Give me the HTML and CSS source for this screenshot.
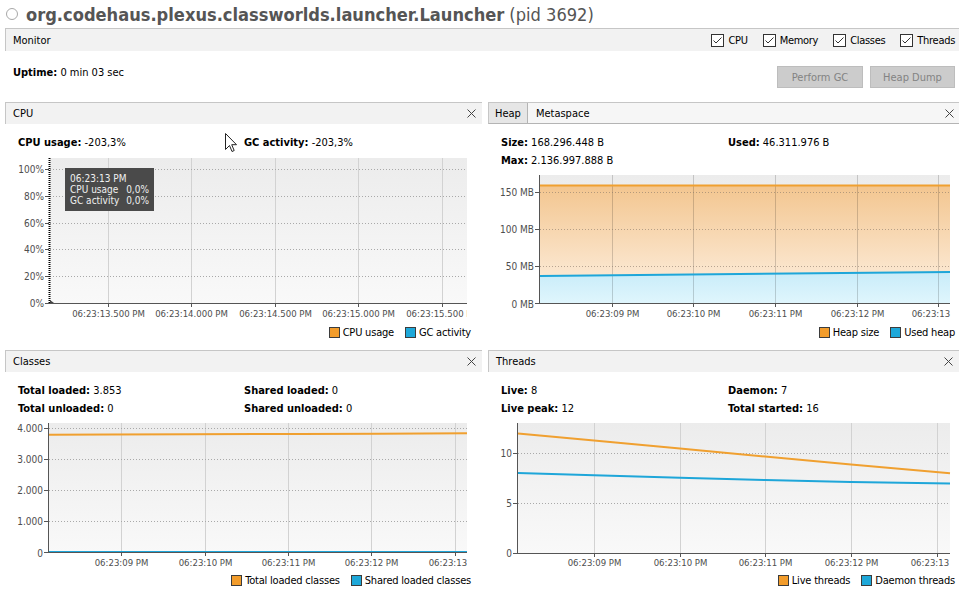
FILE: index.html
```html
<!DOCTYPE html>
<html>
<head>
<meta charset="utf-8">
<link rel="stylesheet" href="styles.css">
</head>
<body>
<div class="app">
  <header class="title">
    <span class="dot"></span>
    <b class="app-name">org.codehaus.plexus.classworlds.launcher.Launcher</b>
    <span class="pid">(pid 3692)</span>
  </header>

  <section class="monitor">
    <div class="monitor-bar">
      <span>Monitor</span>
      <div class="checks">
        <label class="check"><svg class="box" width="13" height="13" viewBox="0 0 13 13"><rect x="0.5" y="0.5" width="12" height="12" fill="#fff" stroke="#333"/><polyline points="2.5,6.5 5,9 10.5,3.5" fill="none" stroke="#333" stroke-width="1"/></svg>CPU</label>
        <label class="check"><svg class="box" width="13" height="13" viewBox="0 0 13 13"><rect x="0.5" y="0.5" width="12" height="12" fill="#fff" stroke="#333"/><polyline points="2.5,6.5 5,9 10.5,3.5" fill="none" stroke="#333" stroke-width="1"/></svg>Memory</label>
        <label class="check"><svg class="box" width="13" height="13" viewBox="0 0 13 13"><rect x="0.5" y="0.5" width="12" height="12" fill="#fff" stroke="#333"/><polyline points="2.5,6.5 5,9 10.5,3.5" fill="none" stroke="#333" stroke-width="1"/></svg>Classes</label>
        <label class="check"><svg class="box" width="13" height="13" viewBox="0 0 13 13"><rect x="0.5" y="0.5" width="12" height="12" fill="#fff" stroke="#333"/><polyline points="2.5,6.5 5,9 10.5,3.5" fill="none" stroke="#333" stroke-width="1"/></svg>Threads</label>
      </div>
    </div>
    <div class="monitor-body">
      <div class="uptime"><b>Uptime:</b> 0 min 03 sec</div>
      <div class="buttons">
        <div class="btn">Perform GC</div>
        <div class="btn btn2">Heap Dump</div>
      </div>
    </div>
  </section>

  <div class="grid">
    <!-- CPU -->
    <section class="panel">
      <div class="phead">
        <span>CPU</span>
        <svg class="close" width="9" height="9" viewBox="0 0 9 9"><path d="M0.5,0.5 L8.5,8.5 M8.5,0.5 L0.5,8.5" stroke="#444" stroke-width="1"/></svg>
      </div>
      <div class="stats one">
        <div><b>CPU usage:</b> -203,3%</div>
        <div class="gc"><b>GC activity:</b> -203,3%
          <svg class="cursor" width="13" height="20" viewBox="0 0 13 20"><path d="M0.5,0.5 V16.5 L4.5,12.5 L7,18.5 L9.2,17.5 L6.7,11.7 H11.5 Z" fill="#fff" stroke="#222" stroke-linejoin="miter"/></svg>
        </div>
      </div>
      <svg class="chart" width="477" height="170" viewBox="5 152 477 170">
        <defs>
          <linearGradient id="bgA" x1="0" y1="0" x2="0" y2="1"><stop offset="0" stop-color="#ececec"/><stop offset="1" stop-color="#f9f9f9"/></linearGradient>
          <clipPath id="clA"><rect x="5" y="152" width="462" height="170"/></clipPath>
        </defs>
        <rect x="50" y="158" width="417" height="146" fill="url(#bgA)"/>
        <g stroke="#d2d2d2" stroke-width="1">
          <line x1="108.5" y1="158" x2="108.5" y2="304"/>
          <line x1="191.5" y1="158" x2="191.5" y2="304"/>
          <line x1="275.5" y1="158" x2="275.5" y2="304"/>
          <line x1="358.5" y1="158" x2="358.5" y2="304"/>
          <line x1="442.5" y1="158" x2="442.5" y2="304"/>
        </g>
        <g stroke="#a9a9a9" stroke-dasharray="1,2">
          <line x1="50" y1="169.5" x2="467" y2="169.5"/>
          <line x1="50" y1="196.5" x2="467" y2="196.5"/>
          <line x1="50" y1="223.5" x2="467" y2="223.5"/>
          <line x1="50" y1="249.5" x2="467" y2="249.5"/>
          <line x1="50" y1="276.5" x2="467" y2="276.5"/>
        </g>
        <g stroke="#555">
          <line x1="45" y1="303.5" x2="467" y2="303.5"/>
          <line x1="45" y1="169.5" x2="49" y2="169.5"/>
          <line x1="45" y1="196.5" x2="49" y2="196.5"/>
          <line x1="45" y1="223.5" x2="49" y2="223.5"/>
          <line x1="45" y1="249.5" x2="49" y2="249.5"/>
          <line x1="45" y1="276.5" x2="49" y2="276.5"/>
          <line x1="108.5" y1="304" x2="108.5" y2="307"/>
          <line x1="191.5" y1="304" x2="191.5" y2="307"/>
          <line x1="275.5" y1="304" x2="275.5" y2="307"/>
          <line x1="358.5" y1="304" x2="358.5" y2="307"/>
          <line x1="442.5" y1="304" x2="442.5" y2="307"/>
        </g>
        <line x1="49.5" y1="158" x2="49.5" y2="304" stroke="#000" stroke-width="2" stroke-dasharray="1,1"/>
        <path d="M50,300 L50,303 L54,303 Z" fill="#444"/>
        <g class="ax" text-anchor="end">
          <text x="44" y="173">100%</text>
          <text x="44" y="200">80%</text>
          <text x="44" y="227">60%</text>
          <text x="44" y="253">40%</text>
          <text x="44" y="280">20%</text>
          <text x="44" y="307">0%</text>
        </g>
        <g class="axx" text-anchor="middle" clip-path="url(#clA)">
          <text x="108.5" y="317">06:23:13.500 PM</text>
          <text x="191.5" y="317">06:23:14.000 PM</text>
          <text x="275.5" y="317">06:23:14.500 PM</text>
          <text x="358.5" y="317">06:23:15.000 PM</text>
          <text x="442.5" y="317">06:23:15.500 PM</text>
        </g>
        <rect x="65" y="168" width="89" height="43" fill="#4a4a4a"/>
        <g class="tip">
          <text x="70" y="182">06:23:13 PM</text>
          <text x="70" y="193">CPU usage</text>
          <text x="70" y="204">GC activity</text>
          <text x="149" y="193" text-anchor="end">0,0%</text>
          <text x="149" y="204" text-anchor="end">0,0%</text>
        </g>
      </svg>
      <div class="legend">
        <span class="li"><i class="sw or"></i>CPU usage</span>
        <span class="li"><i class="sw bl"></i>GC activity</span>
      </div>
    </section>

    <!-- Heap -->
    <section class="panel">
      <div class="phead tabs">
        <div class="tabrow">
          <span class="tab sel">Heap</span>
          <span class="tab">Metaspace</span>
        </div>
        <svg class="close" width="9" height="9" viewBox="0 0 9 9"><path d="M0.5,0.5 L8.5,8.5 M8.5,0.5 L0.5,8.5" stroke="#444" stroke-width="1"/></svg>
      </div>
      <div class="stats right">
        <div><b>Size:</b> 168.296.448 B</div>
        <div><b>Used:</b> 46.311.976 B</div>
        <div><b>Max:</b> 2.136.997.888 B</div>
      </div>
      <svg class="chart" width="471" height="152" viewBox="488 170 471 152">
        <defs>
          <linearGradient id="bgB" x1="0" y1="0" x2="0" y2="1"><stop offset="0" stop-color="#ececec"/><stop offset="1" stop-color="#f9f9f9"/></linearGradient>
          <linearGradient id="orB" x1="0" y1="186" x2="0" y2="304" gradientUnits="userSpaceOnUse"><stop offset="0" stop-color="#f3c690"/><stop offset="0.75" stop-color="#fbe7d0"/><stop offset="1" stop-color="#fdf0e2"/></linearGradient>
          <linearGradient id="blB" x1="0" y1="273" x2="0" y2="304" gradientUnits="userSpaceOnUse"><stop offset="0" stop-color="#c9ecf9"/><stop offset="1" stop-color="#e0f6fd"/></linearGradient>
          <clipPath id="clB"><rect x="488" y="170" width="463" height="152"/></clipPath>
        </defs>
        <rect x="540" y="175" width="410" height="129" fill="url(#bgB)"/>
        <polygon points="540,185.5 950,185.5 950,304 540,304" fill="url(#orB)"/>
        <polygon points="540,276 950,272 950,304 540,304" fill="url(#blB)"/>
        <g stroke="#000" stroke-opacity="0.17">
          <line x1="612.5" y1="175" x2="612.5" y2="304"/>
          <line x1="693.5" y1="175" x2="693.5" y2="304"/>
          <line x1="775.5" y1="175" x2="775.5" y2="304"/>
          <line x1="857.5" y1="175" x2="857.5" y2="304"/>
          <line x1="938.5" y1="175" x2="938.5" y2="304"/>
        </g>
        <g stroke="#8a7a6a" stroke-opacity="0.6" stroke-dasharray="1,2">
          <line x1="540" y1="192.5" x2="950" y2="192.5"/>
          <line x1="540" y1="229.5" x2="950" y2="229.5"/>
          <line x1="540" y1="266.5" x2="950" y2="266.5"/>
        </g>
        <line x1="540" y1="185.5" x2="950" y2="185.5" stroke="#f0a030" stroke-width="2"/>
        <line x1="540" y1="276" x2="950" y2="272" stroke="#1ea6d9" stroke-width="2"/>
        <g stroke="#555">
          <line x1="539.5" y1="175" x2="539.5" y2="304"/>
          <line x1="535" y1="303.5" x2="950" y2="303.5"/>
          <line x1="535" y1="192.5" x2="539" y2="192.5"/>
          <line x1="535" y1="229.5" x2="539" y2="229.5"/>
          <line x1="535" y1="266.5" x2="539" y2="266.5"/>
          <line x1="612.5" y1="304" x2="612.5" y2="307"/>
          <line x1="693.5" y1="304" x2="693.5" y2="307"/>
          <line x1="775.5" y1="304" x2="775.5" y2="307"/>
          <line x1="857.5" y1="304" x2="857.5" y2="307"/>
          <line x1="938.5" y1="304" x2="938.5" y2="307"/>
        </g>
        <g class="ax" text-anchor="end">
          <text x="534" y="196">150 MB</text>
          <text x="534" y="233">100 MB</text>
          <text x="534" y="270">50 MB</text>
          <text x="534" y="307.5">0 MB</text>
        </g>
        <g class="axx" text-anchor="middle" clip-path="url(#clB)">
          <text x="612.5" y="317">06:23:09 PM</text>
          <text x="693.5" y="317">06:23:10 PM</text>
          <text x="775.5" y="317">06:23:11 PM</text>
          <text x="857.5" y="317">06:23:12 PM</text>
          <text x="938.5" y="317">06:23:13 PM</text>
        </g>
      </svg>
      <div class="legend r">
        <span class="li"><i class="sw or"></i>Heap size</span>
        <span class="li"><i class="sw bl"></i>Used heap</span>
      </div>
    </section>

    <!-- Classes -->
    <section class="panel">
      <div class="phead">
        <span>Classes</span>
        <svg class="close" width="9" height="9" viewBox="0 0 9 9"><path d="M0.5,0.5 L8.5,8.5 M8.5,0.5 L0.5,8.5" stroke="#444" stroke-width="1"/></svg>
      </div>
      <div class="stats">
        <div><b>Total loaded:</b> 3.853</div>
        <div><b>Shared loaded:</b> 0</div>
        <div><b>Total unloaded:</b> 0</div>
        <div><b>Shared unloaded:</b> 0</div>
      </div>
      <svg class="chart" width="477" height="152" viewBox="5 418 477 152">
        <defs>
          <linearGradient id="bgC" x1="0" y1="0" x2="0" y2="1"><stop offset="0" stop-color="#ececec"/><stop offset="1" stop-color="#f9f9f9"/></linearGradient>
          <clipPath id="clC"><rect x="5" y="418" width="462" height="152"/></clipPath>
        </defs>
        <rect x="49" y="423" width="418" height="130" fill="url(#bgC)"/>
        <g stroke="#d2d2d2">
          <line x1="121.5" y1="423" x2="121.5" y2="553"/>
          <line x1="205.5" y1="423" x2="205.5" y2="553"/>
          <line x1="288.5" y1="423" x2="288.5" y2="553"/>
          <line x1="371.5" y1="423" x2="371.5" y2="553"/>
          <line x1="455.5" y1="423" x2="455.5" y2="553"/>
        </g>
        <g stroke="#a9a9a9" stroke-dasharray="1,2">
          <line x1="49" y1="428.5" x2="467" y2="428.5"/>
          <line x1="49" y1="459.5" x2="467" y2="459.5"/>
          <line x1="49" y1="490.5" x2="467" y2="490.5"/>
          <line x1="49" y1="521.5" x2="467" y2="521.5"/>
        </g>
        <polyline points="49,434.8 110,434.6 190,434.2 300,434 380,433.8 467,433.3" fill="none" stroke="#f0a030" stroke-width="2"/>
        <line x1="49" y1="551.8" x2="467" y2="551.8" stroke="#1ea6d9" stroke-width="1.6"/>
        <g stroke="#555">
          <line x1="48.5" y1="423" x2="48.5" y2="553"/>
          <line x1="44" y1="552.5" x2="467" y2="552.5"/>
          <line x1="44" y1="428.5" x2="48" y2="428.5"/>
          <line x1="44" y1="459.5" x2="48" y2="459.5"/>
          <line x1="44" y1="490.5" x2="48" y2="490.5"/>
          <line x1="44" y1="521.5" x2="48" y2="521.5"/>
          <line x1="121.5" y1="553" x2="121.5" y2="556"/>
          <line x1="205.5" y1="553" x2="205.5" y2="556"/>
          <line x1="288.5" y1="553" x2="288.5" y2="556"/>
          <line x1="371.5" y1="553" x2="371.5" y2="556"/>
          <line x1="455.5" y1="553" x2="455.5" y2="556"/>
        </g>
        <g class="ax" text-anchor="end">
          <text x="43" y="432">4.000</text>
          <text x="43" y="463">3.000</text>
          <text x="43" y="494">2.000</text>
          <text x="43" y="525">1.000</text>
          <text x="43" y="556.5">0</text>
        </g>
        <g class="axx" text-anchor="middle" clip-path="url(#clC)">
          <text x="121.5" y="566">06:23:09 PM</text>
          <text x="205.5" y="566">06:23:10 PM</text>
          <text x="288.5" y="566">06:23:11 PM</text>
          <text x="371.5" y="566">06:23:12 PM</text>
          <text x="455.5" y="566">06:23:13 PM</text>
        </g>
      </svg>
      <div class="legend">
        <span class="li"><i class="sw or"></i>Total loaded classes</span>
        <span class="li"><i class="sw bl"></i>Shared loaded classes</span>
      </div>
    </section>

    <!-- Threads -->
    <section class="panel">
      <div class="phead">
        <span>Threads</span>
        <svg class="close" width="9" height="9" viewBox="0 0 9 9"><path d="M0.5,0.5 L8.5,8.5 M8.5,0.5 L0.5,8.5" stroke="#444" stroke-width="1"/></svg>
      </div>
      <div class="stats right">
        <div><b>Live:</b> 8</div>
        <div><b>Daemon:</b> 7</div>
        <div><b>Live peak:</b> 12</div>
        <div><b>Total started:</b> 16</div>
      </div>
      <svg class="chart" width="471" height="152" viewBox="488 418 471 152">
        <defs>
          <linearGradient id="bgD" x1="0" y1="0" x2="0" y2="1"><stop offset="0" stop-color="#ececec"/><stop offset="1" stop-color="#f9f9f9"/></linearGradient>
          <clipPath id="clD"><rect x="488" y="418" width="463" height="152"/></clipPath>
        </defs>
        <rect x="518" y="423" width="432" height="130" fill="url(#bgD)"/>
        <g stroke="#d2d2d2">
          <line x1="594.5" y1="423" x2="594.5" y2="553"/>
          <line x1="680.5" y1="423" x2="680.5" y2="553"/>
          <line x1="765.5" y1="423" x2="765.5" y2="553"/>
          <line x1="851.5" y1="423" x2="851.5" y2="553"/>
          <line x1="937.5" y1="423" x2="937.5" y2="553"/>
        </g>
        <g stroke="#a9a9a9" stroke-dasharray="1,2">
          <line x1="518" y1="453.5" x2="950" y2="453.5"/>
          <line x1="518" y1="503.5" x2="950" y2="503.5"/>
        </g>
        <polyline points="518,433.5 594,440.5 680,448.5 765,456.5 851,464.5 950,473.3" fill="none" stroke="#f0a030" stroke-width="2"/>
        <polyline points="518,473 594,475.3 680,477.8 765,480 851,482 950,483.5" fill="none" stroke="#1ea6d9" stroke-width="2"/>
        <g stroke="#555">
          <line x1="517.5" y1="423" x2="517.5" y2="553"/>
          <line x1="513" y1="553.5" x2="950" y2="553.5"/>
          <line x1="513" y1="453.5" x2="517" y2="453.5"/>
          <line x1="513" y1="503.5" x2="517" y2="503.5"/>
          <line x1="594.5" y1="554" x2="594.5" y2="557"/>
          <line x1="680.5" y1="554" x2="680.5" y2="557"/>
          <line x1="765.5" y1="554" x2="765.5" y2="557"/>
          <line x1="851.5" y1="554" x2="851.5" y2="557"/>
          <line x1="937.5" y1="554" x2="937.5" y2="557"/>
        </g>
        <g class="ax" text-anchor="end">
          <text x="512" y="457">10</text>
          <text x="512" y="507">5</text>
          <text x="512" y="557">0</text>
        </g>
        <g class="axx" text-anchor="middle" clip-path="url(#clD)">
          <text x="594.5" y="566">06:23:09 PM</text>
          <text x="680.5" y="566">06:23:10 PM</text>
          <text x="765.5" y="566">06:23:11 PM</text>
          <text x="851.5" y="566">06:23:12 PM</text>
          <text x="937.5" y="566">06:23:13 PM</text>
        </g>
      </svg>
      <div class="legend r">
        <span class="li"><i class="sw or"></i>Live threads</span>
        <span class="li"><i class="sw bl"></i>Daemon threads</span>
      </div>
    </section>
  </div>
</div>
</body>
</html>
```

FILE: styles.css
```css
* { box-sizing: border-box; }

body {
  margin: 0;
  background: #ffffff;
  font-family: "DejaVu Sans Condensed", "DejaVu Sans", sans-serif;
  font-stretch: condensed;
  font-size: 11px;
  color: #000;
}

.app {
  width: 959px;
  height: 591px;
  overflow: hidden;
}

/* title */
.title {
  height: 28px;
  display: flex;
  align-items: center;
  padding-left: 6px;
  color: #555;
  font-size: 18.1px;
  white-space: nowrap;
}
.dot {
  width: 12px;
  height: 12px;
  border: 1.5px solid #a8a8a8;
  border-radius: 50%;
  margin-right: 8px;
  flex: none;
}
.app-name { font-weight: bold; }
.pid { font-weight: normal; margin-left: 5px; }

/* monitor */
.monitor-bar {
  margin-left: 5px;
  height: 23px;
  border-top: 1px solid #c6c6c6;
  border-left: 1px solid #c6c6c6;
  background: #f2f2f2;
  display: flex;
  align-items: center;
  justify-content: space-between;
  padding: 0 4px 0 7px;
}
.checks { display: flex; gap: 15px; letter-spacing: -0.3px; }
.check { display: flex; align-items: center; gap: 4px; }
.box { display: block; }

.monitor-body {
  height: 51px;
  display: flex;
  justify-content: space-between;
  padding: 0 4px 0 13px;
}
.uptime { line-height: 18px; margin-top: 13px; }
.buttons { display: flex; gap: 7px; margin-top: 15px; }
.btn {
  width: 86px;
  height: 22px;
  background: #cccccc;
  border: 1px solid #bdbdbd;
  color: #838383;
  display: flex;
  align-items: center;
  justify-content: center;
}
.btn2 { width: 85px; }

/* grid */
.grid {
  display: grid;
  grid-template-columns: 477px 471px;
  grid-template-rows: 248px 241px;
  column-gap: 6px;
  margin-left: 5px;
}
.panel { display: flex; flex-direction: column; }

.phead {
  height: 22px;
  border-top: 1px solid #c6c6c6;
  border-left: 1px solid #c6c6c6;
  background: #f2f2f2;
  display: flex;
  align-items: center;
  justify-content: space-between;
  padding: 0 6px 0 7px;
  flex: none;
}
.close { display: block; }

.phead.tabs {
  padding: 0 5px 0 0;
  border-bottom: 1px solid #b4b4b4;
  background: #f6f6f6;
  align-items: stretch;
}
.phead.tabs .close { align-self: center; }
.tabrow { display: flex; }
.tab {
  display: flex;
  align-items: center;
  padding: 0 7px 0 8px;
}
.tab.sel {
  background: #e6e6e6;
  border-right: 1px solid #b4b4b4;
  padding: 0 6px 0 6px;
}

.stats {
  display: grid;
  grid-template-columns: 226px 1fr;
  padding: 10px 0 0 13px;
  line-height: 18px;
  flex: none;
}
.stats.right { grid-template-columns: 227px 1fr; }
.gc { position: relative; }
.cursor {
  position: absolute;
  left: -19px;
  top: -1px;
}

.chart { display: block; flex: none; }
.ax { font-size: 10px; fill: #4e4e4e; }
.axx { font-size: 9.5px; fill: #4e4e4e; }
.tip { font-size: 10px; fill: #f0f0f0; }

.legend {
  height: 20px;
  display: flex;
  justify-content: flex-end;
  align-items: center;
  gap: 11px;
  padding-right: 11px;
  letter-spacing: -0.2px;
  flex: none;
}
.legend.r { padding-right: 4px; }
.li { display: flex; align-items: center; gap: 3px; }
.sw {
  width: 11px;
  height: 11px;
  border: 1px solid #3c3c3c;
  display: block;
}
.sw.or { background: #f29c2b; }
.sw.bl { background: #1ea8d9; }
```
